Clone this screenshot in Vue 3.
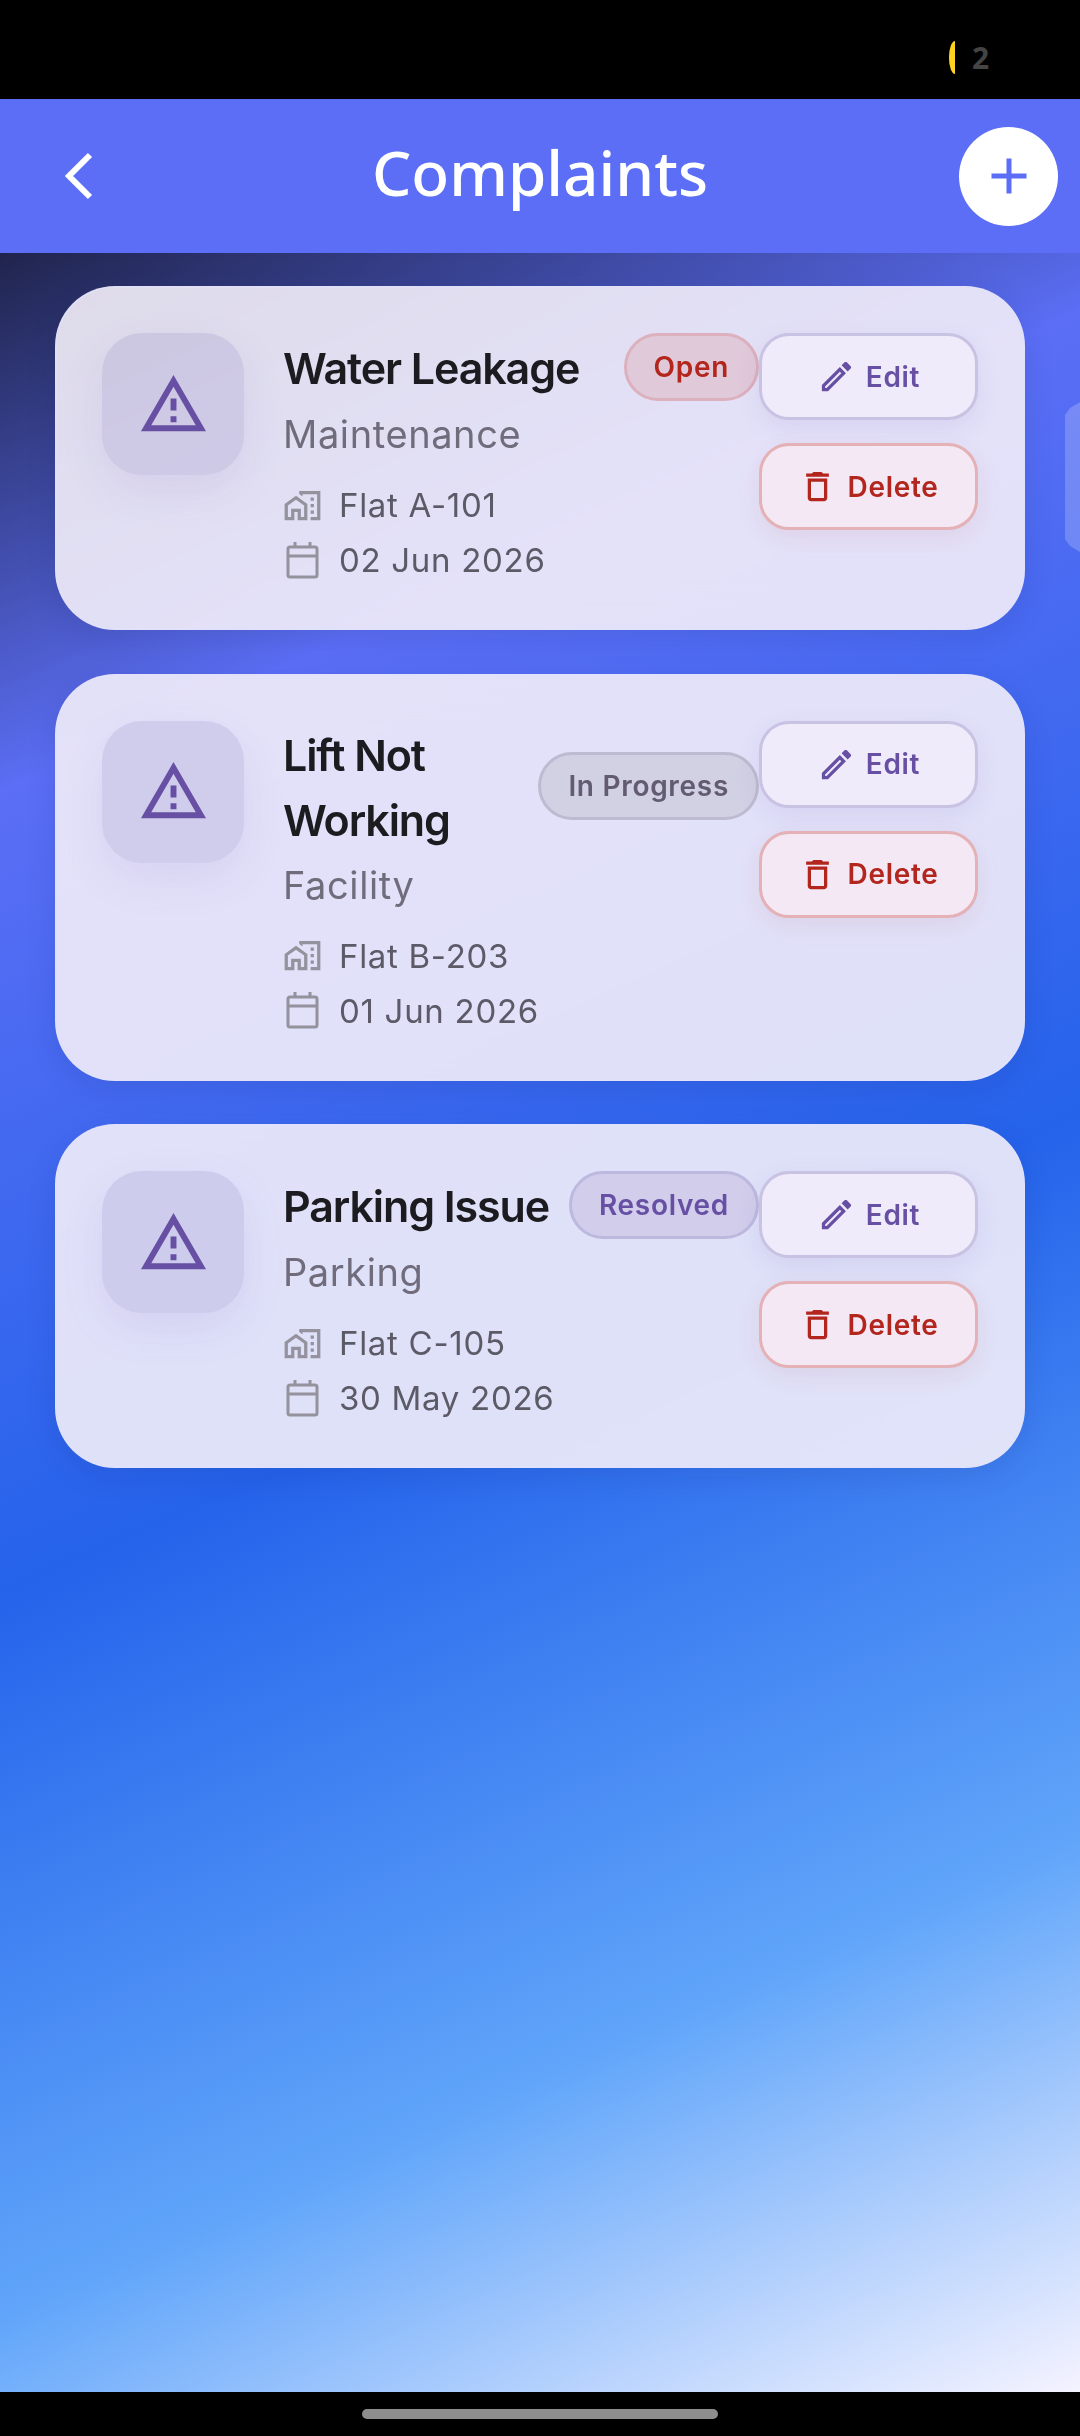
<script setup>
const complaints = [
  { id: 1, title: 'Water Leakage', cat: 'Maintenance', flat: 'Flat A-101', date: '02 Jun 2026', status: 'Open', cls: 'open' },
  { id: 2, title: 'Lift Not Working', cat: 'Facility', flat: 'Flat B-203', date: '01 Jun 2026', status: 'In Progress', cls: 'progress' },
  { id: 3, title: 'Parking Issue', cat: 'Parking', flat: 'Flat C-105', date: '30 May 2026', status: 'Resolved', cls: 'resolved' },
]
</script>

<template>
  <div class="phone">
    <div class="status_bar">
      <span class="pill_dot"></span>
      <span class="status_num">2</span>
    </div>

    <div class="screen">
      <header class="top_bar">
        <svg class="back_icon" viewBox="0 0 34 50" fill="none" stroke="#fff" stroke-width="6">
          <path d="M28 4 L7 25 L28 46" />
        </svg>
        <h1 class="page_title">Complaints</h1>
        <button class="add_btn">
          <svg viewBox="0 0 40 40" width="40" height="40" fill="none" stroke="#5b6ef5" stroke-width="5">
            <path d="M20 2.5V37.5M2.5 20H37.5" />
          </svg>
        </button>
      </header>

      <div class="list">
        <div v-for="c in complaints" :key="c.id" class="card">
          <div class="icon_box">
            <svg viewBox="0 0 24 24" width="71" height="71" fill="#6750a4">
              <path d="M12 5.99L19.53 19H4.47L12 5.99M12 2L1 21h22L12 2zm1 14h-2v2h2v-2zm0-6h-2v4h2v-4z" />
            </svg>
          </div>

          <div class="info">
            <div class="title_row">
              <div class="title">{{ c.title }}</div>
              <span class="badge" :class="c.cls">{{ c.status }}</span>
            </div>
            <div class="category">{{ c.cat }}</div>
            <div class="meta">
              <svg viewBox="0 0 24 24" width="39" height="39" fill="#94929d">
                <path d="M17 7h2v2h-2zM17 11h2v2h-2zM17 15h2v2h-2zM1 11v10h6v-5h2v5h6V11L8 6l-7 5zm12 8h-2v-5H5v5H3v-7l5-3.5 5 3.5v7zM10 3v1.97l2 1.43V5h9v14h-4v2h6V3z" />
              </svg>
              <span>{{ c.flat }}</span>
            </div>
            <div class="meta">
              <svg viewBox="0 0 39 39" width="39" height="39" fill="none" stroke="#94929d" stroke-width="3">
                <rect x="5" y="6" width="29" height="30" rx="2" />
                <path d="M5 15H34M12 1V6M27 1V6" />
              </svg>
              <span>{{ c.date }}</span>
            </div>
          </div>

          <div class="actions">
            <button class="act_btn edit">
              <svg viewBox="0 0 24 24" width="39" height="39" fill="#6750a4">
                <path d="M14.06 9.02l.92.92L5.92 19H5v-.92l9.06-9.06M17.66 3c-.25 0-.51.1-.7.29l-1.83 1.83 3.75 3.75 1.83-1.83c.39-.39.39-1.02 0-1.41l-2.34-2.34c-.2-.2-.45-.29-.71-.29zm-3.6 3.19L3 17.25V21h3.75L17.81 9.94l-3.75-3.75z" />
              </svg>
              Edit
            </button>
            <button class="act_btn del">
              <svg viewBox="0 0 24 24" width="39" height="39" fill="#b3261e">
                <path d="M6 19c0 1.1.9 2 2 2h8c1.1 0 2-.9 2-2V7H6v12zM8 9h8v10H8V9zm7.5-5l-1-1h-5l-1 1H5v2h14V4z" />
              </svg>
              Delete
            </button>
          </div>
        </div>
      </div>

      <div class="side_tab"></div>
    </div>

    <div class="nav_bar">
      <span class="nav_pill"></span>
    </div>
  </div>
</template>

<style>
html, body {
  margin: 0;
  background: #000;
}
</style>

<style scoped>
.phone {
  width: 1080px;
  height: 2436px;
  display: flex;
  flex-direction: column;
  background: #000;
  font-family: Inter, "Liberation Sans", sans-serif;
  overflow: hidden;
}

.status_bar {
  height: 99px;
  display: flex;
  align-items: center;
  padding-left: 949px;
  box-sizing: border-box;
  background: #000;
}
.pill_dot {
  width: 6px;
  height: 33px;
  margin-top: 16px;
  background: #ffd21f;
  border-radius: 6px 0 0 6px / 16px 0 0 16px;
}
.status_num {
  margin-left: 17px;
  margin-top: 16px;
  color: #444;
  font-size: 30px;
  font-weight: 700;
  font-family: "Noto Sans", sans-serif;
}

.screen {
  position: relative;
  flex: 1;
  display: flex;
  flex-direction: column;
  overflow: hidden;
  background: linear-gradient(156deg, #0f0f1c 0%, #5b6ef5 25%, #2563eb 54%, #60a5fa 80%, #f5f3ff 100%);
}

.top_bar {
  height: 154px;
  flex-shrink: 0;
  display: grid;
  grid-template-columns: 121px 1fr 121px;
  align-items: center;
  background: #5b6ef5;
}
.back_icon {
  width: 34px;
  height: 50px;
  margin-left: 62px;
}
.page_title {
  margin: 0 0 8px;
  color: #fff;
  text-align: center;
  font-family: "Noto Sans", sans-serif;
  font-size: 62px;
  font-weight: 500;
}
.add_btn {
  width: 99px;
  height: 99px;
  padding: 0;
  border: none;
  border-radius: 50%;
  background: #fff;
  display: flex;
  align-items: center;
  justify-content: center;
}

.list {
  display: flex;
  flex-direction: column;
  gap: 43.5px;
  padding: 33px 55px 0;
}

.card {
  display: flex;
  align-items: flex-start;
  padding: 45px;
  box-sizing: border-box;
  border-radius: 60px;
  border: 2px solid rgba(225, 225, 250, 0.6);
  background: rgba(243, 238, 250, 0.9);
  backdrop-filter: blur(20px);
  box-shadow: 0 8px 30px rgba(20, 20, 80, 0.1);
}

.icon_box {
  width: 142px;
  height: 142px;
  flex-shrink: 0;
  border-radius: 40px;
  background: rgba(103, 80, 164, 0.15);
  display: flex;
  align-items: center;
  justify-content: center;
  box-shadow: 0 16px 44px rgba(103, 80, 164, 0.1);
}

.info {
  flex: 1;
  min-width: 0;
  margin-left: 39px;
}
.title_row {
  display: flex;
  align-items: center;
  gap: 12px;
}
.title {
  flex: 1;
  margin: 2px 0 -2px;
  color: #1c1b1f;
  font-size: 43px;
  font-weight: 600;
  line-height: 65.5px;
  letter-spacing: -1.1px;
}
.badge {
  height: 68px;
  box-sizing: border-box;
  padding: 0 27px;
  display: flex;
  align-items: center;
  flex-shrink: 0;
  border-radius: 34px;
  border: 3px solid;
  font-size: 28px;
  font-weight: 600;
  letter-spacing: 0.7px;
}
.badge.open {
  color: #b3261e;
  background: #e0c9d9;
  border-color: #dcb0bd;
}
.badge.progress {
  color: #625b71;
  background: #d2d0e3;
  border-color: #bdbbd1;
}
.badge.resolved {
  color: #6750a4;
  background: #d1cdeb;
  border-color: #bdb9de;
}
.category {
  margin-top: 8px;
  margin-bottom: 24px;
  color: #706c7c;
  font-size: 38px;
  line-height: 50px;
  letter-spacing: 0.6px;
}
.meta {
  display: flex;
  align-items: center;
  gap: 17px;
  height: 44px;
  color: #5d5a68;
  font-size: 33px;
  letter-spacing: 0.7px;
}
.meta + .meta {
  margin-top: 11px;
  margin-bottom: 1px;
}

.actions {
  width: 219px;
  flex-shrink: 0;
  display: flex;
  flex-direction: column;
  gap: 23px;
}
.act_btn {
  height: 87px;
  display: flex;
  align-items: center;
  justify-content: center;
  gap: 10px;
  border-radius: 30px;
  border: 3px solid;
  font-family: Inter, sans-serif;
  font-size: 28px;
  font-weight: 600;
  letter-spacing: 0.7px;
}
.act_btn.edit {
  color: #6750a4;
  background: #f0ebfa;
  border-color: #c9c3e3;
  box-shadow: 0 8px 24px rgba(103, 80, 164, 0.1);
}
.act_btn.del {
  color: #b3261e;
  background: #f3e8f3;
  border-color: #e3b1b6;
  box-shadow: 0 8px 24px rgba(179, 38, 30, 0.08);
}

.side_tab {
  position: absolute;
  right: 0;
  top: 303px;
  width: 15px;
  height: 150px;
  background: rgba(255, 255, 255, 0.2);
  clip-path: polygon(0 13px, 5px 6px, 100% 0, 100% 100%, 5px calc(100% - 6px), 0 calc(100% - 13px));
}

.nav_bar {
  height: 44px;
  flex-shrink: 0;
  display: flex;
  justify-content: center;
  padding-top: 17px;
  box-sizing: border-box;
  background: #000;
}
.nav_pill {
  width: 356px;
  height: 10px;
  border-radius: 5px;
  background: #8e8e8e;
}
</style>
